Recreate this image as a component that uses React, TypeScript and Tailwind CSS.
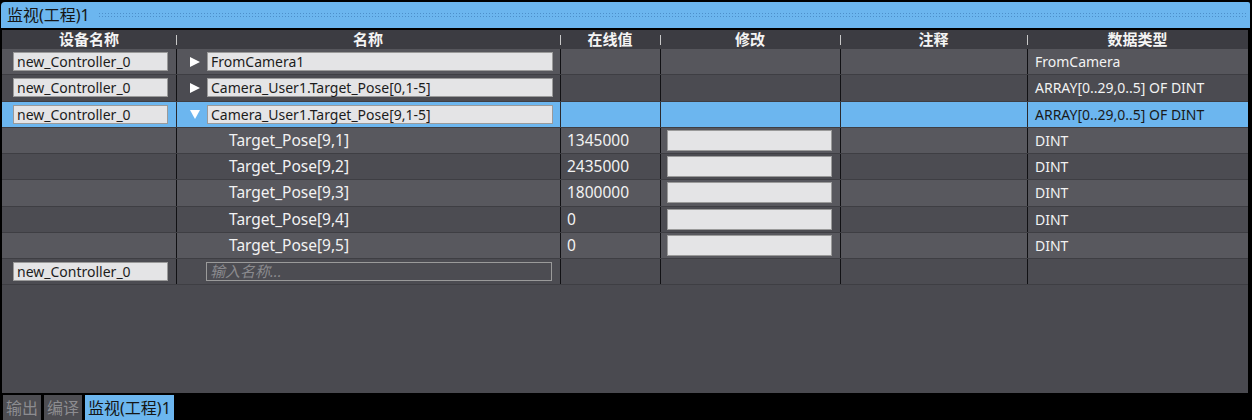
import React from 'react';

const font = { fontFamily: '"Segoe UI", "Noto Sans", "Noto Sans CJK SC", sans-serif' };

const cols = 'grid grid-cols-[174px_384px_100px_180px_187px_221px]';

type Row = {
  device?: boolean;
  name: string;
  arrow?: 'right' | 'down';
  child?: boolean;
  value?: string;
  modify?: boolean;
  type?: string;
  bg: string;
  selected?: boolean;
};

const rows: Row[] = [
  { device: true, name: 'FromCamera1', arrow: 'right', type: 'FromCamera', bg: 'bg-[#56565c]' },
  { device: true, name: 'Camera_User1.Target_Pose[0,1-5]', arrow: 'right', type: 'ARRAY[0..29,0..5] OF DINT', bg: 'bg-[#4b4b51]' },
  { device: true, name: 'Camera_User1.Target_Pose[9,1-5]', arrow: 'down', type: 'ARRAY[0..29,0..5] OF DINT', bg: 'bg-[#6cb6ef]', selected: true },
  { child: true, name: 'Target_Pose[9,1]', value: '1345000', modify: true, type: 'DINT', bg: 'bg-[#58585e]' },
  { child: true, name: 'Target_Pose[9,2]', value: '2435000', modify: true, type: 'DINT', bg: 'bg-[#4c4c52]' },
  { child: true, name: 'Target_Pose[9,3]', value: '1800000', modify: true, type: 'DINT', bg: 'bg-[#58585e]' },
  { child: true, name: 'Target_Pose[9,4]', value: '0', modify: true, type: 'DINT', bg: 'bg-[#4c4c52]' },
  { child: true, name: 'Target_Pose[9,5]', value: '0', modify: true, type: 'DINT', bg: 'bg-[#58585e]' },
];

const headers = ['设备名称', '名称', '在线值', '修改', '注释', '数据类型'];

function DeviceBox() {
  return (
    <div className="ml-[11px] h-[19px] w-[155px] bg-[#e4e4e6] border border-[#9a9a9a] text-[#1c1c1c] text-[14px] leading-[17px] pl-[3px]">
      new_Controller_0
    </div>
  );
}

function Arrow({ dir }: { dir: 'right' | 'down' }) {
  return (
    <svg width="12" height="12" viewBox="0 0 12 12" className="ml-[12px] mr-[6px] shrink-0">
      {dir === 'right' ? <path d="M1 1 L11 6 L1 11 Z" fill="#ffffff" /> : <path d="M1 2 L11 2 L6 11 Z" fill="#ffffff" />}
    </svg>
  );
}

function DataRow({ r }: { r: Row }) {
  const text = r.selected ? 'text-[#1a1a1a]' : 'text-[#f2f2f2]';
  const divider = r.selected ? 'border-l border-[#2a2a2e]' : 'border-l border-[#111114]';
  return (
    <div className={`${cols} h-[26.25px] ${r.bg} border-b border-[#3e3e43] text-[14px] ${text}`}>
      <div className="flex items-center">{r.device && <DeviceBox />}</div>
      <div className={`flex items-center ${divider}`}>
        {r.child ? (
          <span className="ml-[52px] text-[15.5px]">{r.name}</span>
        ) : (
          <>
            {r.arrow && <Arrow dir={r.arrow} />}
            <div className="h-[19px] w-[346px] bg-[#e4e4e6] border border-[#9a9a9a] text-[#1c1c1c] leading-[17px] pl-[3px]">
              {r.name}
            </div>
          </>
        )}
      </div>
      <div className={`flex items-center pl-[6px] text-[15.5px] ${divider}`}>{r.value}</div>
      <div className={`flex items-center ${divider}`}>
        {r.modify && <div className="ml-[6px] h-[21px] w-[165px] bg-[#e4e4e6] border border-[#9a9a9a]" />}
      </div>
      <div className={divider} />
      <div className={`flex items-center pl-[7px] ${divider}`}>{r.type}</div>
    </div>
  );
}

export default function App() {
  return (
    <div className="w-[1252px] h-[420px] bg-black flex flex-col overflow-hidden" style={font}>
      <div className="mt-[2px] ml-[1px] mr-[2px] h-[26px] bg-[#6cb6ef] rounded-tl-[4px] rounded-tr-[2px] flex items-center">
        <span className="ml-[6px] text-[16px] text-[#161616]">监视(工程)1</span>
        <div className="ml-[8px] mr-[2px] flex-1 h-[6px] bg-[radial-gradient(circle,#4d8fca_0.8px,transparent_1px)] bg-[length:3px_3px]" />
      </div>
      <div className="ml-[2px] mr-[4px] mt-[2px] flex-1 bg-[#4a4a50] flex flex-col">
        <div className={`${cols} h-[19px] bg-[#3c3c42] text-[15px] font-bold text-[#f4f4f4]`}>
          {headers.map((h, i) => (
            <div key={h} className="relative flex items-center justify-center leading-none">
              {i > 0 && <div className="absolute left-0 top-[5px] h-[10px] w-px bg-[#c8c8c8]" />}
              {h}
            </div>
          ))}
        </div>
        {rows.map((r) => (
          <DataRow key={r.name} r={r} />
        ))}
        <div className={`${cols} h-[26.25px] bg-[#4c4c52] border-b border-[#3e3e43] text-[14px]`}>
          <div className="flex items-center">
            <DeviceBox />
          </div>
          <div className="flex items-center border-l border-[#111114]">
            <div className="ml-[29px] h-[19px] w-[346px] border border-[#9a9a9a] text-[#8a8a8e] italic text-[15px] leading-[17px] pl-[3px]">
              输入名称...
            </div>
          </div>
          <div className="border-l border-[#111114]" />
          <div className="border-l border-[#111114]" />
          <div className="border-l border-[#111114]" />
          <div className="border-l border-[#111114]" />
        </div>
        <div className="flex-1" />
      </div>
      <div className="h-[25px] mt-[2px] flex items-stretch gap-[3px] pl-[3px] text-[16px]">
        <div className="px-[3px] bg-[#4d4d52] text-[#8c8c90] flex items-center">输出</div>
        <div className="px-[3px] bg-[#4d4d52] text-[#8c8c90] flex items-center">编译</div>
        <div className="px-[3px] bg-[#6cb6ef] text-[#161616] flex items-center">监视(工程)1</div>
      </div>
    </div>
  );
}
